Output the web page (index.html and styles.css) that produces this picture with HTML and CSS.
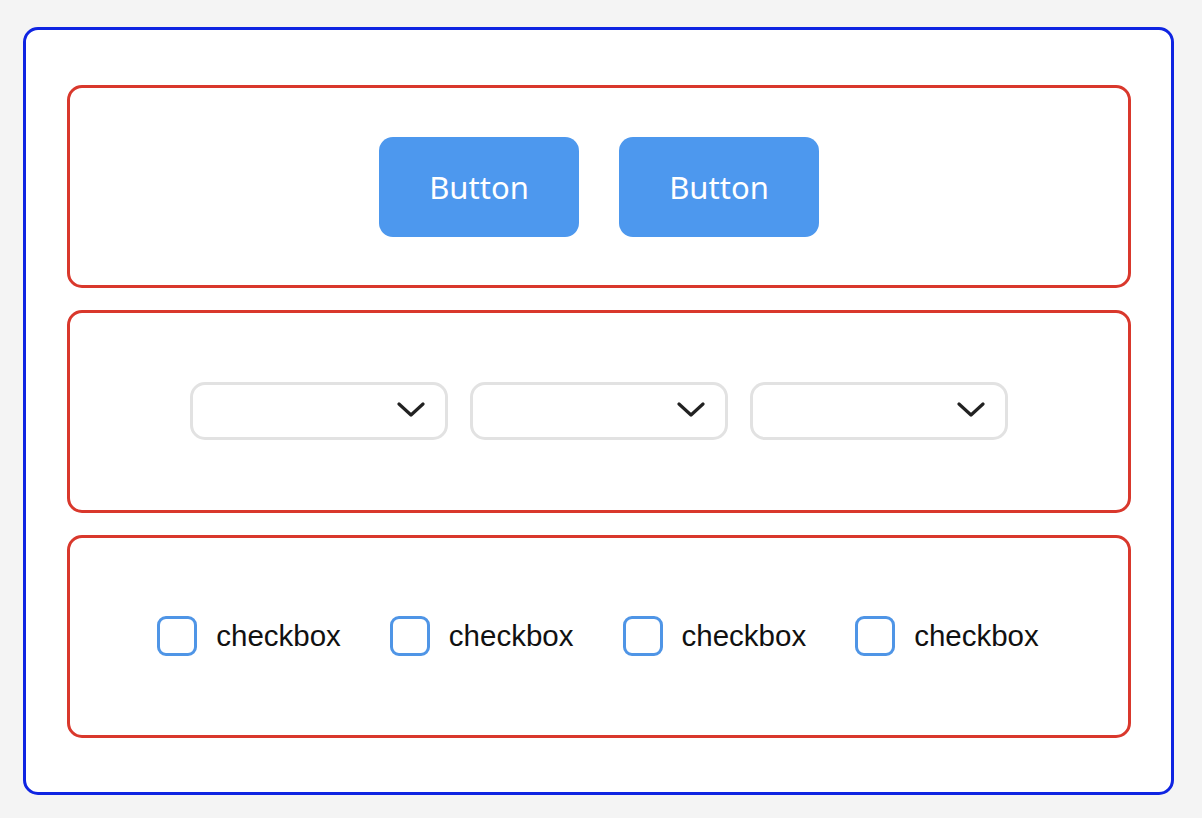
FILE: index.html
```html
<!DOCTYPE html>
<html>
<head>
<meta charset="utf-8">
<link rel="stylesheet" href="styles.css">
</head>
<body>
<div class="frame">
  <section class="panel">
    <button class="btn">Button</button>
    <button class="btn">Button</button>
  </section>
  <section class="panel panel-selects">
    <div class="select"><svg class="chev" width="28" height="16" viewBox="0 0 28 16"><path d="M2 2 L14 13 L26 2" fill="none" stroke="#222" stroke-width="3.2" stroke-linecap="round" stroke-linejoin="round"/></svg></div>
    <div class="select"><svg class="chev" width="28" height="16" viewBox="0 0 28 16"><path d="M2 2 L14 13 L26 2" fill="none" stroke="#222" stroke-width="3.2" stroke-linecap="round" stroke-linejoin="round"/></svg></div>
    <div class="select"><svg class="chev" width="28" height="16" viewBox="0 0 28 16"><path d="M2 2 L14 13 L26 2" fill="none" stroke="#222" stroke-width="3.2" stroke-linecap="round" stroke-linejoin="round"/></svg></div>
  </section>
  <section class="panel panel-checks">
    <label class="check"><span class="box"></span><span class="label">checkbox</span></label>
    <label class="check"><span class="box"></span><span class="label">checkbox</span></label>
    <label class="check"><span class="box"></span><span class="label">checkbox</span></label>
    <label class="check"><span class="box"></span><span class="label">checkbox</span></label>
  </section>
</div>
</body>
</html>
```
FILE: styles.css
```css
html, body {
  margin: 0;
  padding: 0;
  background: #f4f4f4;
}
* { box-sizing: border-box; }
body {
  padding: 27px 0 0 23px;
  font-family: "Liberation Sans", Arial, sans-serif;
}
.frame {
  width: 1151px;
  height: 768px;
  background: #fff;
  border: 3px solid #0f24e2;
  border-radius: 15px;
  padding: 55px 40px 0 41px;
  display: flex;
  flex-direction: column;
  gap: 22px;
}
.panel {
  height: 203px;
  border: 3px solid #d9382c;
  border-radius: 15px;
  display: flex;
  align-items: center;
  justify-content: center;
  gap: 40px;
}
.btn {
  width: 200px;
  height: 100px;
  border: none;
  border-radius: 14px;
  background: #4d98ee;
  color: #fff;
  font-family: "Noto Sans", "Open Sans", sans-serif;
  font-size: 31px;
  padding: 0;
  margin-top: 1px;
}
.panel-selects { gap: 22px; padding-bottom: 2px; }
.select {
  width: 258px;
  height: 58px;
  border: 3px solid #e2e2e2;
  border-radius: 15px;
  display: flex;
  align-items: center;
  justify-content: flex-end;
  padding-right: 20px;
}
.chev { display: block; margin-top: -2px; }
.panel-checks { gap: 49px; padding-bottom: 2px; padding-right: 2px; }
.check {
  display: flex;
  align-items: center;
  gap: 19px;
}
.box {
  width: 40px;
  height: 40px;
  border: 3px solid #4f95e6;
  border-radius: 9px;
}
.label {
  font-size: 29.5px;
  color: #111;
}
```
